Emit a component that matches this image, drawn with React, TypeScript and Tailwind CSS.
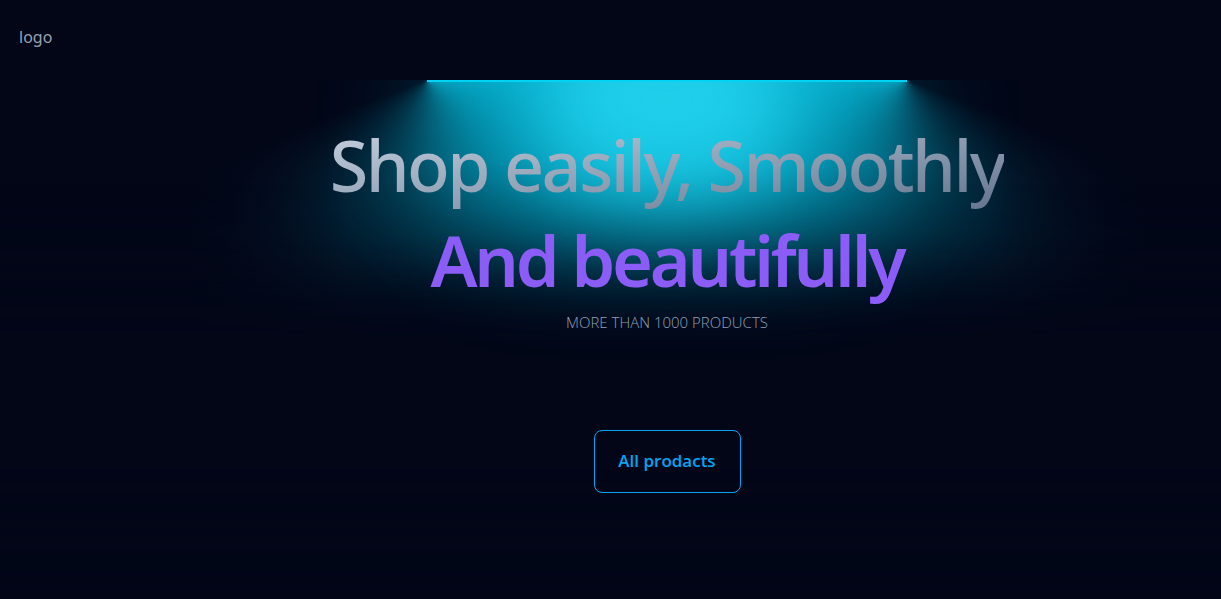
export default function App() {
  return (
    <div className="flex h-[599px] w-full overflow-hidden bg-[#020617] font-['Noto_Sans','Open_Sans',sans-serif]">
      <aside className="w-[113px] shrink-0 px-[19px] pt-[25px]">
        <span className="text-[16px] leading-6 text-gray-400">logo</span>
      </aside>

      <main className="relative isolate flex flex-1 flex-col items-center">
        {/* lamp, anchored on the line */}
        <div className="relative mt-[80px] h-0 w-full">
          <div className="absolute right-1/2 top-0 h-[280px] w-[480px] bg-[conic-gradient(from_70deg_at_50%_0%,#06b6d4_0%,rgba(6,182,212,0)_50%,rgba(6,182,212,0)_100%)]">
            <div className="absolute bottom-0 left-0 h-[200px] w-full bg-gradient-to-t from-[#020617] to-[rgba(2,6,23,0)]" />
            <div className="absolute bottom-0 left-0 h-full w-40 bg-gradient-to-r from-[#020617] to-[rgba(2,6,23,0)]" />
          </div>
          <div className="absolute left-1/2 top-0 h-[280px] w-[480px] bg-[conic-gradient(from_290deg_at_50%_0%,rgba(6,182,212,0)_0%,rgba(6,182,212,0)_50%,#06b6d4_100%)]">
            <div className="absolute bottom-0 right-0 h-[200px] w-full bg-gradient-to-t from-[#020617] to-[rgba(2,6,23,0)]" />
            <div className="absolute bottom-0 right-0 h-full w-40 bg-gradient-to-l from-[#020617] to-[rgba(2,6,23,0)]" />
          </div>
          <div className="absolute left-1/2 top-[200px] h-[240px] w-full -translate-x-1/2 scale-x-150 bg-[#020617] blur-2xl" />
          <div className="absolute left-1/2 top-[-40px] h-[180px] w-[448px] -translate-x-1/2 rounded-full bg-cyan-500 opacity-50 blur-3xl" />
          <div className="absolute left-1/2 top-[-70px] h-[180px] w-[256px] -translate-x-1/2 rounded-full bg-[#22d3ee] opacity-90 blur-2xl" />
          <div className="absolute bottom-0 left-1/2 h-[220px] w-full -translate-x-1/2 bg-[#020617]" />
          <div className="absolute left-1/2 top-0 h-[2px] w-[480px] -translate-x-1/2 bg-cyan-400" />
        </div>

        <h1 className="relative mt-[38px] bg-gradient-to-br from-slate-300 to-slate-500 bg-clip-text text-center text-[70px] font-medium leading-[95px] tracking-[-2.5px] text-transparent">
          Shop easily, Smoothly
        </h1>
        <h2 className="relative text-center text-[70px] font-semibold leading-[95px] tracking-[-3.2px] text-[#8b5cf6]">
          And beautifully
        </h2>
        <p className="relative mt-[3px] font-['Open_Sans',sans-serif] text-[15px] font-light uppercase text-slate-400">
          More than 1000 products
        </p>

        <button className="relative mt-[96px] h-[63px] w-[147px] rounded-lg border border-sky-500 font-['Open_Sans',sans-serif] text-[17px] font-semibold text-sky-500">
          All prodacts
        </button>
      </main>
    </div>
  );
}
